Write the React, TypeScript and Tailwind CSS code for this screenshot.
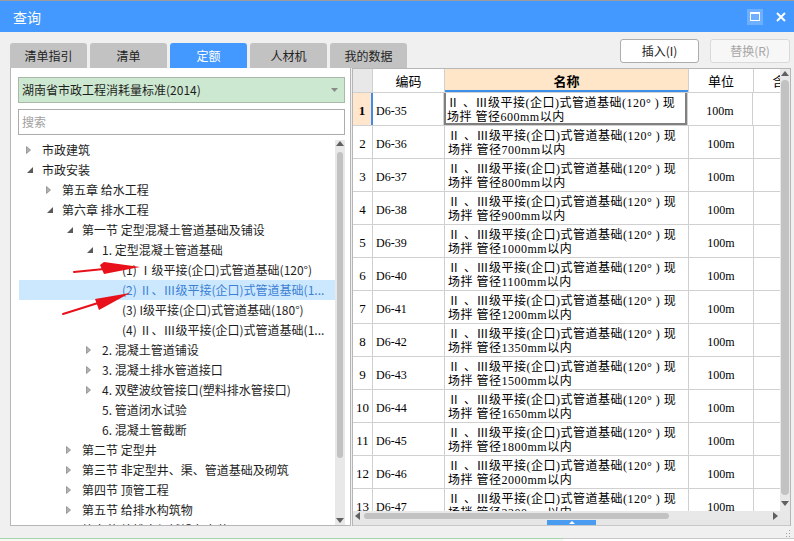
import React from "react";

type TNode = { level: number; state: "c" | "e" | "l"; text: string; hl?: boolean };

const tree: TNode[] = [
  { level: 0, state: "c", text: "市政建筑" },
  { level: 0, state: "e", text: "市政安装" },
  { level: 1, state: "c", text: "第五章 给水工程" },
  { level: 1, state: "e", text: "第六章 排水工程" },
  { level: 2, state: "e", text: "第一节 定型混凝土管道基础及铺设" },
  { level: 3, state: "e", text: "1. 定型混凝土管道基础" },
  { level: 4, state: "l", text: "(1) Ⅰ级平接(企口)式管道基础(120°)" },
  { level: 4, state: "l", text: "(2) Ⅱ、Ⅲ级平接(企口)式管道基础(1...", hl: true },
  { level: 4, state: "l", text: "(3) I级平接(企口)式管道基础(180°)" },
  { level: 4, state: "l", text: "(4) Ⅱ、Ⅲ级平接(企口)式管道基础(1..." },
  { level: 3, state: "c", text: "2. 混凝土管道铺设" },
  { level: 3, state: "c", text: "3. 混凝土排水管道接口" },
  { level: 3, state: "c", text: "4. 双壁波纹管接口(塑料排水管接口)" },
  { level: 3, state: "l", text: "5. 管道闭水试验" },
  { level: 3, state: "l", text: "6. 混凝土管截断" },
  { level: 2, state: "c", text: "第二节 定型井" },
  { level: 2, state: "c", text: "第三节 非定型井、渠、管道基础及砌筑" },
  { level: 2, state: "c", text: "第四节 顶管工程" },
  { level: 2, state: "c", text: "第五节 给排水构筑物" },
  { level: 2, state: "c", text: "第六节 给排水机械设备安装" },
];

const indent = ["w-0", "w-[20px]", "w-[40px]", "w-[60px]", "w-[80px]"];

const sizes = [600, 700, 800, 900, 1000, 1100, 1200, 1350, 1500, 1650, 1800, 2000, 2200];

function Tri({ state }: { state: "c" | "e" | "l" }) {
  if (state === "c")
    return (
      <svg width="5" height="8" viewBox="0 0 5 8" className="ml-[7px]">
        <path d="M0.5 0.5 L4.5 4 L0.5 7.5 Z" fill="#b0b0b0" stroke="#8e8e8e" strokeWidth="0.8" />
      </svg>
    );
  if (state === "e")
    return (
      <svg width="6" height="6" viewBox="0 0 6 6" className="ml-[8px]">
        <path d="M6 0 L6 6 L0 6 Z" fill="#5a5a5a" />
      </svg>
    );
  return null;
}

function Arrow({ dir }: { dir: "up" | "down" | "left" | "right" }) {
  const d =
    dir === "up"
      ? "M0 5 L4 0 L8 5 Z"
      : dir === "down"
      ? "M0 0 L8 0 L4 5 Z"
      : dir === "left"
      ? "M5 0 L5 8 L0 4 Z"
      : "M0 0 L5 4 L0 8 Z";
  const w = dir === "up" || dir === "down" ? 8 : 5;
  const h = dir === "up" || dir === "down" ? 5 : 8;
  return (
    <svg width={w} height={h} viewBox={`0 0 ${w} ${h}`}>
      <path d={d} fill="#606060" />
    </svg>
  );
}

export default function App() {
  return (
    <div className="relative w-[794px] h-[541px] overflow-hidden bg-[#f0f0f0] flex flex-col font-['Noto_Sans_CJK_SC',sans-serif]">
      {/* Title bar */}
      <div className="h-[32px] shrink-0 bg-[#4399ff] border-t border-[#9c9c9c] flex items-center pl-[13px] pr-[4px]">
        <span className="text-white text-[14px] leading-none">查询</span>
        <div className="flex-1" />
        <div className="w-[16px] h-[16px] bg-[#6cb0ff] flex items-center justify-center mr-[13px]">
          <div className="w-[10px] h-[9px] border border-t-2 border-white" />
        </div>
        <svg width="10" height="10" viewBox="0 0 10 10" className="mr-[4px]">
          <path d="M1 1 L9 9 M9 1 L1 9" stroke="white" strokeWidth="2" />
        </svg>
      </div>

      {/* Tabs + buttons */}
      <div className="h-[36px] shrink-0 flex items-end pl-[10px] pr-[4px]">
        {["清单指引", "清单", "定额", "人材机", "我的数据"].map((t) => (
          <div
            key={t}
            className={
              t === "定额"
                ? "w-[77px] h-[25px] mr-[3px] rounded-t-[3px] bg-[#4399ff] text-white text-[12px] flex items-center justify-center"
                : "w-[77px] h-[25px] mr-[3px] rounded-t-[3px] bg-[#c2c2c2] text-[#222] text-[12px] flex items-center justify-center"
            }
          >
            {t}
          </div>
        ))}
        <div className="flex-1" />
        <div className="self-start mt-[7px] flex gap-[11px]">
          <div className="w-[79px] h-[24px] bg-white border border-[#adadad] rounded-[3px] text-[12px] text-[#222] flex items-center justify-center">
            插入(I)
          </div>
          <div className="w-[80px] h-[24px] bg-[#f7f7f7] border border-[#d9d9d9] rounded-[3px] text-[12px] text-[#a6a6a6] flex items-center justify-center">
            替换(R)
          </div>
        </div>
      </div>

      {/* Main */}
      <div className="h-[458px] shrink-0 flex pl-[10px] gap-[1px]">
        {/* Left panel */}
        <div className="w-[341px] bg-white border border-t-0 border-[#b6b6b6] flex flex-col">
          <div className="mt-[9px] ml-[7px] mr-[5px] h-[26px] bg-[#cde8d0] border border-[#a9b9a9] flex items-center pl-[3px] pr-[6px] text-[12px] text-[#1e1e1e]">
            <span className="flex-1">湖南省市政工程消耗量标准(2014)</span>
            <svg width="7" height="4" viewBox="0 0 7 4">
              <path d="M0 0 L7 0 L3.5 4 Z" fill="#8a8a8a" />
            </svg>
          </div>
          <div className="mt-[6px] ml-[7px] mr-[5px] h-[26px] bg-white border border-[#acacac] flex items-center pl-[3px] text-[12px] text-[#a0a0a0]">
            搜索
          </div>
          <div className="mt-[5px] flex-1 min-h-0 flex pr-[5px]">
            <div className="flex-1 min-w-0 overflow-hidden pl-[8px] text-[12px]">
              {tree.map((n, i) => (
                <div
                  key={i}
                  className={
                    n.hl
                      ? "flex items-center h-[20px] bg-[#cce8ff] text-[#3c80d4]"
                      : "flex items-center h-[20px] text-[#1e1e1e]"
                  }
                >
                  <div className={"shrink-0 " + indent[n.level]} />
                  <div className="w-[23px] shrink-0 flex items-center">
                    <Tri state={n.state} />
                  </div>
                  <span className="whitespace-nowrap leading-[20px]">{n.text}</span>
                </div>
              ))}
            </div>
            <div className="w-[10px] shrink-0 bg-[#e8e8e8] flex flex-col items-center pt-[1px] pb-[2px]">
              <Arrow dir="up" />
              <div className="mt-[6px] w-[6px] h-[306px] rounded-full bg-[#c2c2c2]" />
              <div className="flex-1" />
              <Arrow dir="down" />
            </div>
          </div>
        </div>

        {/* Right panel */}
        <div className="w-[439px] flex flex-col border-l border-r border-[#b6b6b6]">
          <div className="h-[452px] shrink-0 flex border-t border-[#b6b6b6]">
            <div className="flex-1 min-w-0 flex flex-col">
              <div className="flex-1 min-h-0 overflow-hidden bg-white">
                {/* Header */}
                <div className="flex h-[24px] border-b border-[#d0d0d0] text-[13px] text-black">
                  <div className="w-[20px] shrink-0 bg-[#e8e8e8] border-r border-[#d0d0d0]" />
                  <div className="w-[72px] shrink-0 border-r border-[#d0d0d0] flex items-center justify-center">编码</div>
                  <div className="w-[244px] shrink-0 border-r border-[#d0d0d0] bg-[#ffe6c8] flex items-center justify-center font-bold shadow-[inset_0_-2px_0_#3d8ee8]">
                    名称
                  </div>
                  <div className="w-[65px] shrink-0 border-r border-[#d0d0d0] flex items-center justify-center">单位</div>
                  <div className="w-[50px] shrink-0 flex items-center justify-center">含</div>
                </div>
                {/* Rows */}
                {sizes.map((s, i) => (
                  <div
                    key={i}
                    className="flex h-[33px] border-b border-[#d0d0d0] text-[12px] text-black font-['Liberation_Serif','Noto_Sans_CJK_SC',serif]"
                  >
                    <div
                      className={
                        i === 0
                          ? "w-[20px] shrink-0 bg-[#ffe6cc] border-r-2 border-[#3d8ee8] flex items-center justify-center pt-[3px] font-bold text-[13px]"
                          : "w-[20px] shrink-0 border-r border-[#d0d0d0] flex items-center justify-center pt-[3px] text-[13px]"
                      }
                    >
                      {i + 1}
                    </div>
                    <div
                      className={
                        i === 0
                          ? "w-[71px] shrink-0 border-r border-[#d0d0d0] flex items-center pl-[3px] pt-[3px]"
                          : "w-[72px] shrink-0 border-r border-[#d0d0d0] flex items-center pl-[3px] pt-[3px]"
                      }
                    >
                      D6-{35 + i}
                    </div>
                    <div
                      className={
                        i === 0
                          ? "w-[244px] shrink-0 border-r border-[#d0d0d0] flex flex-col justify-center pl-[3px] pt-[2px] leading-[14px] tracking-[0.5px] whitespace-nowrap overflow-hidden shadow-[inset_2px_0_0_#808080,inset_-2px_0_0_#808080,inset_0_-2px_0_#808080]"
                          : "w-[244px] shrink-0 border-r border-[#d0d0d0] flex flex-col justify-center pl-[3px] pt-[2px] leading-[14px] tracking-[0.5px] whitespace-nowrap overflow-hidden"
                      }
                    >
                      <span>Ⅱ 、Ⅲ级平接(企口)式管道基础(120° ) 现</span>
                      <span>场拌 管径{s}mm以内</span>
                    </div>
                    <div className="w-[65px] shrink-0 border-r border-[#d0d0d0] flex items-center justify-center pt-[3px]">
                      100m
                    </div>
                    <div className="w-[50px] shrink-0" />
                  </div>
                ))}
              </div>
              {/* Horizontal scrollbar */}
              <div className="h-[9px] shrink-0 bg-[#e8e8e8] flex items-center px-[2px]">
                <Arrow dir="left" />
                <div className="ml-[4px] w-[305px] h-[6px] rounded-full bg-[#c2c2c2]" />
                <div className="flex-1" />
                <Arrow dir="right" />
              </div>
            </div>
            {/* Vertical scrollbar */}
            <div className="w-[10px] shrink-0 bg-[#e8e8e8] flex flex-col items-center pt-[2px] pb-[14px]">
              <Arrow dir="up" />
              <div className="mt-[4px] w-[8px] h-[415px] rounded-full bg-[#c2c2c2]" />
              <div className="flex-1" />
              <Arrow dir="down" />
            </div>
          </div>
          <div className="h-[6px] shrink-0 bg-[#e6e6e6] border-b border-[#c8c8c8] flex justify-center">
            <div className="w-[49px] h-[5px] bg-[#4a9cf0] flex items-center justify-center">
              <svg width="6" height="3" viewBox="0 0 6 3">
                <path d="M0 3 L3 0 L6 3 Z" fill="white" />
              </svg>
            </div>
          </div>
        </div>
      </div>

      {/* Bottom */}
      <div className="h-[12px] shrink-0 flex justify-end items-end pr-[3px]">
        <svg width="6" height="8" viewBox="0 0 6 8">
          <rect x="4" y="0" width="1" height="1" fill="#a0a0a0" />
          <rect x="4" y="3" width="1" height="1" fill="#a0a0a0" />
          <rect x="1" y="3" width="1" height="1" fill="#a0a0a0" />
          <rect x="4" y="6" width="1" height="1" fill="#a0a0a0" />
          <rect x="1" y="6" width="1" height="1" fill="#a0a0a0" />
        </svg>
      </div>
      <div className="h-[3px] shrink-0 flex">
        <div className="w-[563px] border-t border-[#a8d4ab] bg-[#f4fbf4]" />
        <div className="flex-1 border-t border-[#c8c8c8] bg-white" />
      </div>

      {/* Red annotation arrows */}
      <svg className="absolute left-0 top-0 pointer-events-none" width="794" height="541" viewBox="0 0 794 541">
        <path d="M74 272 L104 269" stroke="#e8101a" strokeWidth="2" strokeLinecap="round" />
        <path d="M100 265 L104 262 L140 267 L104 274 Z" fill="#e8101a" />
        <path d="M63 314 L98 303" stroke="#e8101a" strokeWidth="2" strokeLinecap="round" />
        <path d="M95 299 L130 293 L99 310 Z" fill="#e8101a" />
      </svg>
    </div>
  );
}
